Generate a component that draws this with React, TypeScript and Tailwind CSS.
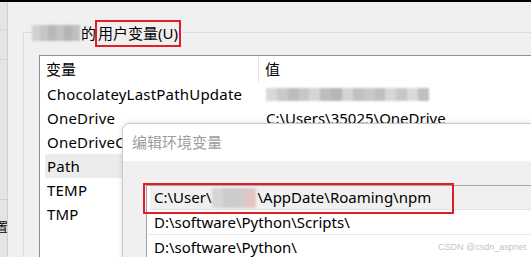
import React from 'react';

const font = { fontFamily: '"Noto Sans", "Noto Sans CJK SC", sans-serif' };

const rows = [
  { name: 'ChocolateyLastPathUpdate', value: 'blur' },
  { name: 'OneDrive', value: 'C:\\Users\\35025\\OneDrive' },
  { name: 'OneDriveConsumer', value: 'C:\\Users\\35025\\OneDrive' },
  { name: 'Path', value: '', selected: true },
  { name: 'TEMP', value: '' },
  { name: 'TMP', value: '' },
];

const Mosaic: React.FC<{ className?: string; colors: string[] }> = ({ className, colors }) => (
  <div className={`flex blur-[1px] ${className ?? ''}`}>
    {colors.map((c, i) => (
      <div key={i} className="flex-1 h-full" style={{ background: c }} />
    ))}
  </div>
);

const App: React.FC = () => {
  return (
    <div
      className="relative w-[531px] h-[257px] overflow-hidden bg-[#f0f0f0] border-t-2 border-black text-[15px] text-black"
      style={font}
    >
      {/* window behind, left edge */}
      <div className="absolute left-0 top-0 bottom-0 w-[8px] bg-[#e4e4e4] border-r border-[#cfcfcf] flex flex-col overflow-hidden">
        <div className="h-[28px] border-b border-[#d6d6d6]" />
        <div className="h-[30px] border-b border-[#d6d6d6]" />
        <div className="h-[140px] border-b border-[#cfcfcf]" />
        <div className="pt-[22px] text-[12px] leading-none -ml-[4px] whitespace-nowrap">置</div>
      </div>

      {/* group box */}
      <div className="absolute left-[23px] top-[30px] right-0 bottom-0 border-l border-t border-[#dcdcdc]" />
      <div className="absolute left-[32px] top-[18px] flex items-center h-[26px] bg-[#f0f0f0] pr-[2px]">
        <Mosaic
          className="w-[48px] h-[16px] mr-[1px]"
          colors={['#d0d0d0', '#c6c6c6', '#b8b8b8', '#c2c2c2', '#b4b4b4', '#bfbfbf']}
        />
        <span className="leading-none">的</span>
        <span className="leading-none border-2 border-[#e51c23] px-[1px] py-[4px] -ml-[1px]">用户变量(U)</span>
      </div>

      {/* user variable list */}
      <div className="absolute left-[39px] top-[53px] right-[-4px] bottom-[-4px] bg-white border border-[#8e8f94]">
        <div className="flex h-[26px] items-center">
          <div className="w-[219px] pl-[6px] border-r border-[#e5e5e5] h-full flex items-center">变量</div>
          <div className="pl-[6px]">值</div>
        </div>
        {rows.map((r) => (
          <div
            key={r.name}
            className={`flex h-[24px] items-center mx-[5px] ${r.selected ? 'bg-[#ececec]' : ''}`}
          >
            <div className="w-[215px] pl-[2px] whitespace-nowrap overflow-hidden tracking-[0.2px]">{r.name}</div>
            <div className="pl-[6px] whitespace-nowrap">
              {r.value === 'blur' ? (
                <Mosaic
                  className="w-[163px] h-[13px]"
                  colors={['#d8d8d8', '#c9c9c9', '#bcbcbc', '#c3c7cc', '#d6d6d6', '#bdbdbd', '#b3b6bb', '#d4d4d4', '#c1c1c1', '#c8c8c8', '#bcc0c4', '#d6d6d6', '#c4c8cc', '#dadada', '#bfbfbf']}
                />
              ) : (
                r.value
              )}
            </div>
          </div>
        ))}
      </div>

      {/* edit environment variable dialog */}
      <div className="absolute left-[122px] top-[121px] right-[-10px] bottom-[-10px] rounded-tl-[8px] border border-[#c9c9c9] bg-[#f0f0f0] overflow-hidden shadow-[0_0_6px_rgba(0,0,0,0.12)]">
        <div className="h-[37px] bg-white flex items-center pl-[9px] text-[#9c9c9c]">编辑环境变量</div>
        <div className="pl-[23px] pt-[24px]">
          <div className="bg-white border-l border-t border-[#a5a5a5] h-[120px]">
            <div className="h-[24px] flex items-center bg-[#f0f0f0] ml-[3px] pl-[4px] whitespace-nowrap border-b border-[#e3e3e3]">
              <span>C:\User\</span>
              <Mosaic
                className="w-[44px] h-[20px] mx-[1px]"
                colors={['#d6d6d6', '#cbcbcb', '#d0cccc', '#e2c6c6']}
              />
              <span>\AppDate\Roaming\npm</span>
            </div>
            <div className="h-[25px] flex items-center pl-[7px] whitespace-nowrap border-b border-[#e8e8e8]">
              D:\software\Python\Scripts\
            </div>
            <div className="h-[25px] flex items-center pl-[7px] whitespace-nowrap">D:\software\Python\</div>
          </div>
        </div>
      </div>

      {/* highlight on first dialog row */}
      <div className="absolute left-[143px] top-[181px] w-[311px] h-[31px] border-2 border-[#e51c23]" />

      <div
        className="absolute left-[438px] top-[241px] text-[9px] text-[#c4c4c4] leading-none whitespace-nowrap"
        style={{ fontFamily: '"Liberation Sans", sans-serif' }}
      >
        CSDN @csdn_aspnet
      </div>
    </div>
  );
};

export default App;
